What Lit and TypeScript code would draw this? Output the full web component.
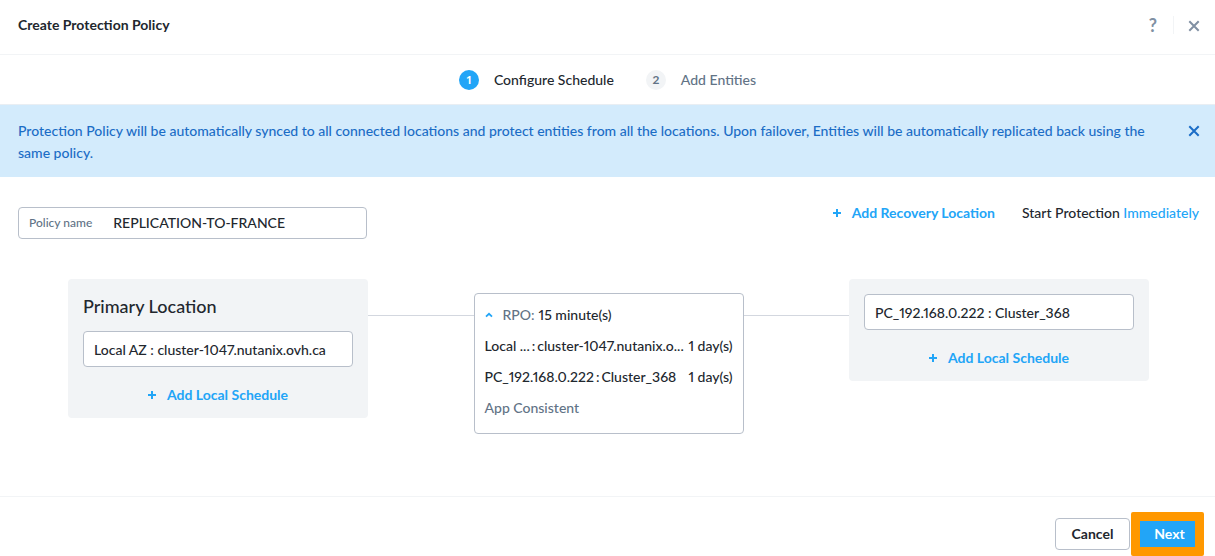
import { LitElement, html, css } from "lit";
import { customElement, property, state } from "lit/decorators.js";

const plus = html`<svg class="plus" viewBox="0 0 8 8" width="8" height="8" aria-hidden="true">
  <path d="M4 0V8M0 4H8" fill="none" stroke="currentColor" stroke-width="2" />
</svg>`;

const cross = html`<svg viewBox="0 0 12 12" width="12" height="12" aria-hidden="true">
  <path d="M1.3 1.3L10.7 10.7M10.7 1.3L1.3 10.7" fill="none" stroke="currentColor" stroke-width="2" />
</svg>`;

const shared = css`
  :host {
    display: block;
  }
  button {
    margin: 0;
    padding: 0;
    border: 0;
    background: none;
    color: inherit;
    font: inherit;
    cursor: pointer;
  }
  input {
    min-width: 0;
    margin: 0;
    padding: 0;
    border: 0;
    outline: 0;
    background: none;
    color: #22272e;
    font: inherit;
    font-variant-numeric: proportional-nums;
  }
  svg {
    display: block;
  }
  .action {
    display: inline-flex;
    align-items: center;
    gap: 11px;
    color: #22a5f7;
    font-weight: 700;
  }
`;

@customElement("location-panel")
class LocationPanel extends LitElement {
  @property() heading = "";
  @property() value = "";

  static styles = [
    shared,
    css`
      .panel {
        display: flex;
        flex-direction: column;
        align-items: center;
        padding: 15px 15px 12px;
        border-radius: 4px;
        background: #f2f4f6;
      }
      .heading {
        align-self: stretch;
        margin: 0 0 13px;
        font-size: 18px;
        font-weight: 500;
        line-height: 24px;
      }
      .field {
        box-sizing: border-box;
        width: 100%;
        height: 36px;
        margin-bottom: 17px;
        padding: 0 10px;
        border: 1px solid #b8bfca;
        border-radius: 4px;
        background: #fff;
      }
    `,
  ];

  render() {
    return html`<section class="panel">
      ${this.heading ? html`<h2 class="heading">${this.heading}</h2>` : null}
      <input class="field" aria-label=${this.heading || "Recovery Location"} .value=${this.value} />
      <button class="action">${plus}Add Local Schedule</button>
    </section>`;
  }
}

@customElement("rpo-card")
class RpoCard extends LitElement {
  static styles = [
    shared,
    css`
      .card {
        display: flex;
        flex-direction: column;
        gap: 9px;
        padding: 10px 10px 14px;
        border: 1px solid #b8bfca;
        border-radius: 4px;
        background: #fff;
        white-space: nowrap;
      }
      .line {
        display: flex;
        justify-content: space-between;
      }
      .pair {
        display: flex;
        gap: 2px;
      }
      .rpo {
        display: flex;
        align-items: center;
        gap: 4px;
      }
      .toggle {
        margin-right: 6px;
        color: #22a5f7;
      }
      .muted {
        color: #627386;
      }
    `,
  ];

  private retention(zone: string, cluster: string, keep: string) {
    return html`<div class="line">
      <span class="pair"><span>${zone}</span><span>:</span><span>${cluster}</span></span>
      <span>${keep}</span>
    </div>`;
  }

  render() {
    return html`<section class="card">
      <div class="rpo">
        <button class="toggle" aria-label="Collapse">
          <svg viewBox="0 0 8 6" width="8" height="6">
            <path d="M1 4.6L4 1.8L7 4.6" fill="none" stroke="currentColor" stroke-width="1.8" />
          </svg>
        </button>
        <span class="muted">RPO:</span><span>15 minute(s)</span>
      </div>
      ${this.retention("Local ...", "cluster-1047.nutanix.o...", "1 day(s)")}
      ${this.retention("PC_192.168.0.222", "Cluster_368", "1 day(s)")}
      <div class="muted">App Consistent</div>
    </section>`;
  }
}

@customElement("app-root")
class AppRoot extends LitElement {
  @state() private policyName = "REPLICATION-TO-FRANCE";

  static styles = [
    shared,
    css`
      .page {
        display: flex;
        flex-direction: column;
        min-height: 100vh;
        background: #fff;
        color: #22272e;
        font-family: Lato, "Open Sans", sans-serif;
        font-size: 14px;
        font-weight: 500;
        font-variant-numeric: proportional-nums;
        line-height: 22px;
      }
      .header {
        display: flex;
        align-items: center;
        justify-content: space-between;
        padding: 14px 15px 18px 18px;
        border-bottom: 1px solid #f2f4f6;
      }
      .title {
        margin: 0;
        font-size: 14px;
        font-weight: 700;
      }
      .tools {
        display: flex;
        align-items: center;
        color: #8090a3;
      }
      .help {
        padding: 0 16px;
        font-size: 18px;
        font-weight: 700;
      }
      .close {
        padding: 4px 0 2px 14px;
        border-left: 1px solid #f2f4f6;
      }
      .steps {
        display: flex;
        justify-content: center;
        gap: 32px;
        margin: 0;
        padding: 14px 0 13px;
        border-bottom: 1px solid #e9eef3;
        list-style: none;
      }
      .step {
        display: flex;
        align-items: center;
        gap: 15px;
        color: #627386;
      }
      .number {
        width: 20px;
        border-radius: 50%;
        background: #f2f4f6;
        font-size: 12px;
        font-weight: 700;
        line-height: 20px;
        text-align: center;
      }
      .current {
        color: #22272e;
      }
      .current .number {
        background: #22a5f7;
        color: #fff;
      }
      .banner {
        display: flex;
        align-items: flex-start;
        justify-content: space-between;
        gap: 32px;
        padding: 15px 15px 13px 18px;
        background: #d3ebfc;
        color: #1b6dc6;
      }
      .message {
        margin: 0;
      }
      .dismiss {
        padding: 5px 0;
      }
      .toolbar {
        display: flex;
        align-items: flex-start;
        padding: 30px 16px 40px 18px;
      }
      .policy {
        display: flex;
        align-items: center;
        box-sizing: border-box;
        width: 349px;
        height: 32px;
        padding: 0 10px;
        gap: 21px;
        border: 1px solid #b8bfca;
        border-radius: 4px;
      }
      .policy label {
        color: #627386;
        font-size: 12px;
      }
      .policy input {
        flex: 1;
      }
      .options {
        display: flex;
        gap: 27px;
        margin-left: auto;
        margin-top: -5px;
      }
      .start a {
        color: #22a5f7;
        text-decoration: none;
      }
      .flow {
        display: flex;
        align-items: flex-start;
        padding: 0 66px 0 68px;
      }
      .location {
        flex: 0 0 300px;
      }
      .schedule {
        flex: 0 0 270px;
        margin-top: 14px;
      }
      .link {
        flex: 1;
        height: 1px;
        margin-top: 36px;
        background: #d3d7df;
      }
      .footer {
        display: flex;
        align-items: center;
        justify-content: flex-end;
        gap: 1px;
        margin-top: auto;
        padding: 15px 11px 0 0;
        border-top: 1px solid #f2f4f6;
        font-weight: 700;
      }
      .cancel {
        width: 75px;
        height: 32px;
        border: 1px solid #b8bfca;
        border-radius: 4px;
      }
      .next {
        width: 73px;
        height: 44px;
        padding-left: 4px;
        border: 9px solid #ff9800;
        border-radius: 2px;
        background: #22a5f7;
        color: #fff;
      }
    `,
  ];

  render() {
    return html`<main class="page">
      <header class="header">
        <h1 class="title">Create Protection Policy</h1>
        <div class="tools">
          <button class="help" aria-label="Help">?</button>
          <button class="close" aria-label="Close">${cross}</button>
        </div>
      </header>
      <ol class="steps">
        <li class="step current" aria-current="step"><span class="number">1</span>Configure Schedule</li>
        <li class="step"><span class="number">2</span>Add Entities</li>
      </ol>
      <div class="banner" role="status">
        <p class="message">
          Protection Policy will be automatically synced to all connected locations and protect entities from all the
          locations. Upon failover, Entities will be automatically replicated back using the same policy.
        </p>
        <button class="dismiss" aria-label="Dismiss">${cross}</button>
      </div>
      <div class="toolbar">
        <div class="policy">
          <label for="policy-name">Policy name</label>
          <input id="policy-name" .value=${this.policyName} />
        </div>
        <div class="options">
          <button class="action">${plus}Add Recovery Location</button>
          <span class="start">Start Protection <a href="#">Immediately</a></span>
        </div>
      </div>
      <div class="flow">
        <location-panel
          class="location"
          heading="Primary Location"
          value="Local AZ : cluster-1047.nutanix.ovh.ca"
        ></location-panel>
        <div class="link"></div>
        <rpo-card class="schedule"></rpo-card>
        <div class="link"></div>
        <location-panel class="location" value="PC_192.168.0.222 : Cluster_368"></location-panel>
      </div>
      <footer class="footer">
        <button class="cancel">Cancel</button>
        <button class="next">Next</button>
      </footer>
    </main>`;
  }
}
